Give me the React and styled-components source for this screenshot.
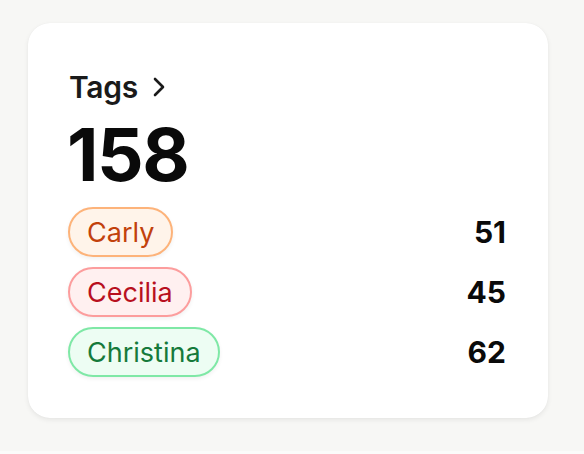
import React from "react";
import styled, { createGlobalStyle } from "styled-components";

const GlobalStyle = createGlobalStyle`
  html, body {
    margin: 0;
    padding: 0;
    background: #fbfbfa;
    font-family: Inter, "Noto Sans", sans-serif;
  }
`;

const tones = {
  orange: { bg: "#fff4ea", border: "#fdb37a", text: "#c2410c" },
  red: { bg: "#fff0f0", border: "#fc9d9d", text: "#b8101f" },
  green: { bg: "#edfdf3", border: "#7fe8a6", text: "#157a3b" },
};

const tags = [
  { name: "Carly", count: 51, tone: "orange" },
  { name: "Cecilia", count: 45, tone: "red" },
  { name: "Christina", count: 62, tone: "green" },
];

const Page = styled.div`
  height: 451px;
  box-sizing: border-box;
  background: #f7f7f5;
  padding: 23px 36px 0 28px;
`;

const Card = styled.div`
  width: 520px;
  height: 395px;
  box-sizing: border-box;
  background: #fff;
  border-radius: 22px;
  box-shadow: 0 2px 5px rgba(0, 0, 0, 0.07), 0 0 1px rgba(0, 0, 0, 0.06);
  padding: 46px 42px 0 41px;
  display: flex;
  flex-direction: column;
`;

const Header = styled.div`
  display: flex;
  align-items: center;
  gap: 14px;
  font-size: 30px;
  font-weight: 600;
  color: #1a1a1a;
  line-height: 36px;
  letter-spacing: -0.3px;
`;

const Total = styled.div`
  font-size: 73px;
  font-weight: 700;
  line-height: 80px;
  color: #0a0a0a;
  letter-spacing: -1.5px;
  margin-top: 10px;
  margin-left: -2px;
`;

const List = styled.div`
  display: flex;
  flex-direction: column;
  gap: 10px;
  margin-top: 12px;
`;

const Row = styled.div`
  display: flex;
  align-items: center;
  justify-content: space-between;
`;

const Pill = styled.span`
  box-sizing: border-box;
  height: 50px;
  display: inline-flex;
  align-items: center;
  padding: 0 17px;
  border-radius: 25px;
  border: 2px solid ${(p) => tones[p.$tone].border};
  background: ${(p) => tones[p.$tone].bg};
  color: ${(p) => tones[p.$tone].text};
  font-size: 27px;
  box-shadow: 0 2px 4px rgba(0, 0, 0, 0.06);
  margin-left: -1px;
`;

const Count = styled.span`
  font-size: 30px;
  font-weight: 700;
  color: #0a0a0a;
`;

const Chevron = () => (
  <svg width="14" height="20" viewBox="0 0 14 20" fill="none">
    <path
      d="M3 2l8 8-8 8"
      stroke="#1a1a1a"
      strokeWidth="2.6"
      strokeLinecap="round"
      strokeLinejoin="round"
    />
  </svg>
);

export default function App() {
  return (
    <Page>
      <GlobalStyle />
      <Card>
        <Header>
          Tags <Chevron />
        </Header>
        <Total>158</Total>
        <List>
          {tags.map((t) => (
            <Row key={t.name}>
              <Pill $tone={t.tone}>{t.name}</Pill>
              <Count>{t.count}</Count>
            </Row>
          ))}
        </List>
      </Card>
    </Page>
  );
}
